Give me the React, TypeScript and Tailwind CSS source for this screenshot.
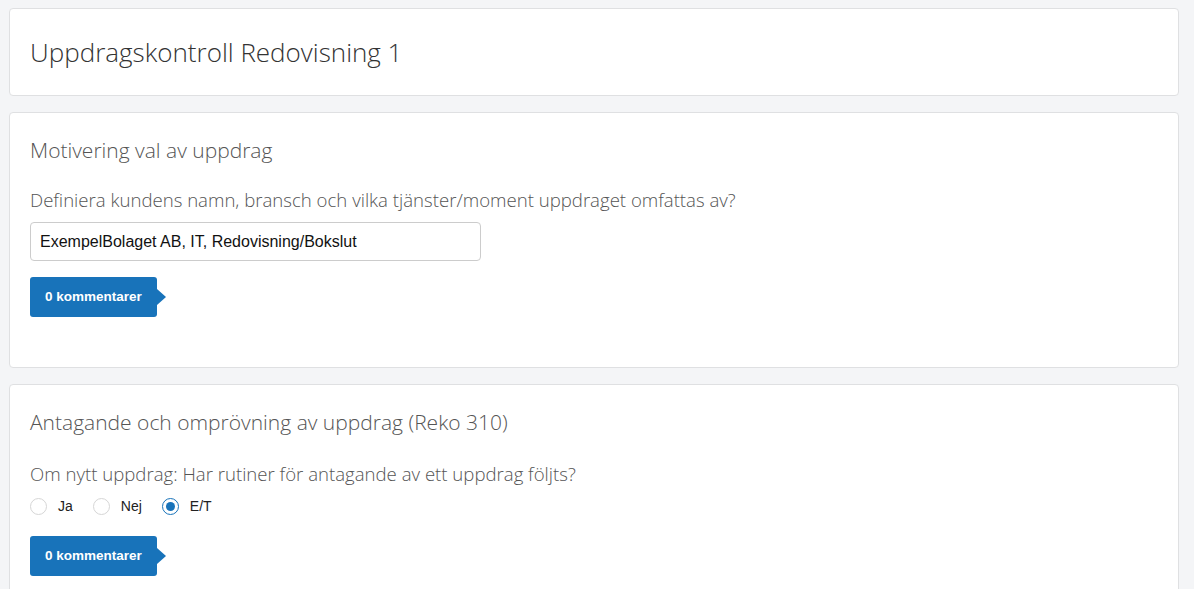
import { useState } from "react";

const light = { fontFamily: '"Open Sans", "Noto Sans", sans-serif' };
const arial = { fontFamily: '"Liberation Sans", Arial, sans-serif' };

function CommentButton() {
    return (
        <button
            type="button"
            style={arial}
            className="relative flex items-center h-[40px] w-[127px] pl-[15px] rounded-[3px] bg-[#1873ba] text-white text-[13.5px] font-bold"
        >
            0 kommentarer
            <span className="absolute right-[-9px] top-1/2 -translate-y-1/2 w-0 h-0 border-y-[8px] border-y-transparent border-l-[9px] border-l-[#1873ba]" />
        </button>
    );
}

function Radio({ label, checked, onClick }: { label: string; checked: boolean; onClick: () => void }) {
    return (
        <label className="flex items-center cursor-pointer mr-[20px]" onClick={onClick}>
            <span
                className={
                    checked
                        ? "flex items-center justify-center w-[17px] h-[17px] rounded-full border border-[#1873ba] bg-white"
                        : "w-[17px] h-[17px] rounded-full border border-[#d6d6d6] bg-white"
                }
            >
                {checked && <span className="w-[9px] h-[9px] rounded-full bg-[#1873ba]" />}
            </span>
            <span style={arial} className="ml-[11px] text-[14px] text-[#222]">
                {label}
            </span>
        </label>
    );
}

export default function App() {
    const [choice, setChoice] = useState("E/T");

    return (
        <div className="min-h-screen bg-[#f4f5f7] pl-[9px] pr-[15px] pt-[8px] pb-4 flex flex-col gap-4">
            <div className="bg-white border border-[#dfe0e2] rounded-[4px] h-[88px] px-[20px] flex items-center">
                <h1 style={light} className="text-[26px] font-light text-[#333]">
                    Uppdragskontroll Redovisning 1
                </h1>
            </div>

            <div className="bg-white border border-[#dfe0e2] rounded-[4px] px-[20px] pt-[21px] pb-[50px]">
                <h2 style={light} className="text-[21px] leading-[32px] font-light text-[#555]">
                    Motivering val av uppdrag
                </h2>
                <p style={light} className="mt-[21px] text-[18.6px] leading-[26px] font-light text-[#555]">
                    Definiera kundens namn, bransch och vilka tjänster/moment uppdraget omfattas av?
                </p>
                <input
                    style={arial}
                    className="mt-[9px] block w-[451px] h-[39px] px-[9px] border border-[#ccc] rounded-[4px] text-[16px] text-[#111] outline-none"
                    defaultValue="ExempelBolaget AB, IT, Redovisning/Bokslut"
                />
                <div className="mt-[16px]">
                    <CommentButton />
                </div>
            </div>

            <div className="bg-white border border-[#dfe0e2] rounded-[4px] px-[20px] pt-[21px] pb-[51px]">
                <h2 style={light} className="text-[21px] leading-[32px] font-light text-[#555]">
                    Antagande och omprövning av uppdrag (Reko 310)
                </h2>
                <p style={light} className="mt-[23px] text-[18.6px] leading-[26px] font-light text-[#555]">
                    Om nytt uppdrag: Har rutiner för antagande av ett uppdrag följts?
                </p>
                <div className="mt-[5px] flex items-center h-[28px]">
                    {["Ja", "Nej", "E/T"].map((o) => (
                        <Radio key={o} label={o} checked={choice === o} onClick={() => setChoice(o)} />
                    ))}
                </div>
                <div className="mt-[16px]">
                    <CommentButton />
                </div>
            </div>
        </div>
    );
}
